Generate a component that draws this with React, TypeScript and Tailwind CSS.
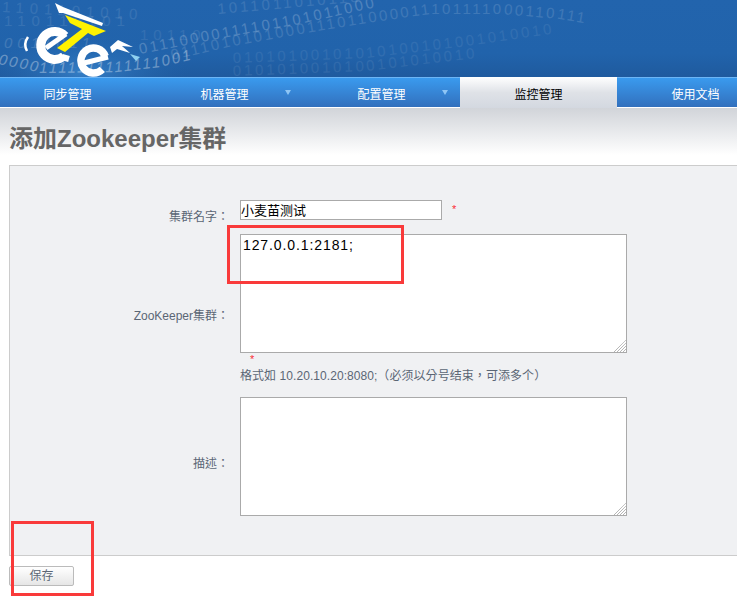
import React from "react";

const navItems = [
  { label: "同步管理" },
  { label: "机器管理", arrow: true },
  { label: "配置管理", arrow: true },
  { label: "监控管理", active: true },
  { label: "使用文档" },
];

// binary digits in the banner
const HeaderArt = () => (
  <svg width="737" height="77" viewBox="0 0 737 77" className="block">
    <defs>
      <radialGradient id="glow" cx="0.5" cy="0.5" r="0.5">
        <stop offset="0" stopColor="#3f8fd8" stopOpacity="0.7" />
        <stop offset="1" stopColor="#2163ab" stopOpacity="0" />
      </radialGradient>
      <linearGradient id="fade" x1="0" y1="0" x2="0" y2="1">
        <stop offset="0" stopColor="#2264ad" />
        <stop offset="0.7" stopColor="#2163ab" />
        <stop offset="1" stopColor="#1f5a9e" />
      </linearGradient>
      <path id="a" d="M140 54 L233 36 L300 24 L372 8 L460 -8" />
      <path id="b" d="M172 60 L233 46 L300 34 L367 23 L430 14 L500 14 L560 19 L660 36" />
      <path id="c" d="M-2 64 L43 73 L117 72 L160 67 L190 60" />
      <path id="d" d="M233 63 L367 58 L467 46 L550 34 L680 34" />
      <path id="e" d="M233 76 L367 71 L467 59 L550 51 L640 51" />
      <path id="f" d="M2 12 L180 22" />
      <path id="g" d="M4 26 L150 26" />
    </defs>
    <rect width="737" height="77" fill="url(#fade)" />
    <ellipse cx="85" cy="72" rx="105" ry="38" fill="url(#glow)" />
    <g fontFamily="Liberation Sans, sans-serif" fontSize="15" fill="#fff">
      <text opacity="0.09" letterSpacing="6"><textPath href="#f">1101101010</textPath></text>
      <text opacity="0.09" letterSpacing="6"><textPath href="#g">110110101</textPath></text>
      <text x="4" y="48" opacity="0.14" fontStyle="italic" letterSpacing="5">0011011</text>
      <text x="140" y="40" opacity="0.08" letterSpacing="5">10110</text>
      <text opacity="0.2" letterSpacing="2.5"><textPath href="#a">01110000111101101011000</textPath></text>
      <text opacity="0.13" letterSpacing="2.5"><textPath href="#b">0111010101000111011000011101111000110111</textPath></text>
      <text opacity="0.32" letterSpacing="2.2" fontStyle="italic"><textPath href="#c">000011111111111110011</textPath></text>
      <text opacity="0.07" letterSpacing="2.8"><textPath href="#d">01010100101010100101001010010</textPath></text>
      <text opacity="0.07" letterSpacing="2.8"><textPath href="#e">0101010010100101010010</textPath></text>
      <text x="218" y="14" opacity="0.11" letterSpacing="3" transform="rotate(-5 218 14)">1011011010110</text>
    </g>
    {/* logo */}
    <g fill="none" stroke="#fff">
      <path d="M55 3 L63 7 L103 23 L102 26 L63 13 L59 13 Z" fill="#fff" stroke="none" />
      <path d="M64 56 A 14 14 0 1 1 65 36" strokeWidth="9" />
      <path d="M46 48 L66 34" strokeWidth="5" />
      <path d="M62 57 L69 59" strokeWidth="6" />
      <path d="M65 15 L106 31 L94 36 L88 33 L65 52 L57 48 L82 29 L70 23 Z" fill="#fff200" stroke="none" />
      <path d="M105.2 56.2 A 12.5 12.5 0 1 0 102.3 69.3" strokeWidth="7.5" />
      <path d="M84 63 L108 57" strokeWidth="5" />
      <path d="M28 37 Q23 44 27 51" strokeWidth="2.5" />
      <path d="M110 47 L118 40 L133 47 L122 46 L130 53 L117 49 L112 53 Z" fill="#fff" stroke="none" />
      <path d="M130 54 L140 57 L136 61 Z" fill="#8fd0f0" stroke="none" />
    </g>
  </svg>
);

const Grip = () => (
  <svg width="12" height="12" viewBox="0 0 12 12" className="pointer-events-none absolute right-px bottom-px">
    <path d="M0 12 L12 0 M3 12 L12 3 M6 12 L12 6 M9 12 L12 9" stroke="#999" strokeDasharray="1 0.5" />
  </svg>
);

export default function App() {
  return (
    <div className="relative h-[615px] w-[737px] overflow-hidden bg-white font-['Liberation_Sans','Noto_Sans_CJK_TC',sans-serif] text-xs text-[#5b6675]">
      <HeaderArt />

      <nav className="flex h-[31px] border-b border-white bg-gradient-to-b from-[#3a9cf0] to-[#3270bd] shadow-[inset_0_1px_0_#6db5f5]">
        <div className="-ml-[11px] flex">
          {navItems.map((item) => (
            <div
              key={item.label}
              className={
                item.active
                  ? "relative z-10 flex h-[31px] w-[157px] shrink-0 items-center justify-center bg-gradient-to-b from-white via-[#dfe2e7] via-50% to-[#d3d8e0] pt-[5px] text-black"
                  : "relative flex h-[30px] w-[157px] shrink-0 items-center justify-center pt-[5px] text-white"
              }
            >
              {item.label}
              {item.arrow && (
                <span className="absolute top-[13px] left-[139px] h-0 w-0 border-x-[3px] border-t-[5px] border-x-transparent border-t-[#8ec5f5]" />
              )}
            </div>
          ))}
        </div>
      </nav>

      <div className="h-[47px] bg-gradient-to-b from-[#d1d4d9] to-white pt-[16px] pl-[9px]">
        <h1 className="text-2xl leading-[30px] font-bold text-[#666]">添加Zookeeper集群</h1>
      </div>

      <form className="mt-[10px] ml-[9px] h-[391px] border border-r-0 border-[#ccc] bg-[#f0f1f3] pt-[34px]">
        <div className="mb-[2px] grid h-[32px] grid-cols-[219px_1fr] items-center gap-x-[11px]">
          <label className="pt-[2px] text-right">集群名字：</label>
          <div className="flex h-full items-start">
            <input
              defaultValue="小麦苗测试"
              className="h-[20px] w-[202px] border border-[#aaa] bg-white pb-[2px] text-[13px] text-black outline-none"
            />
            <span className="ml-[10px] text-[11px] leading-[18px] text-red-500">*</span>
          </div>
        </div>

        <div className="mb-px grid h-[162px] grid-cols-[219px_1fr] items-center gap-x-[11px]">
          <label className="pt-[2px] text-right">ZooKeeper集群：</label>
          <div className="h-full">
            <div className="relative h-[119px] w-[387px]">
              <textarea
                defaultValue="127.0.0.1:2181;"
                className="block h-full w-full resize-none border border-[#aaa] bg-white px-[2px] text-[14px] leading-[20px] tracking-[0.9px] text-black outline-none"
              />
              <Grip />
            </div>
            <div className="h-[12px] pl-[10px] text-[11px] leading-[12px] text-red-500">*</div>
            <div className="mt-[3px] leading-[16px] tracking-[0.06px]">
              格式如 10.20.10.20:8080;（必须以分号结束，可添多个）
            </div>
          </div>
        </div>

        <div className="grid h-[132px] grid-cols-[219px_1fr] items-center gap-x-[11px]">
          <label className="pt-[2px] text-right">描述：</label>
          <div className="h-full">
            <div className="relative h-[119px] w-[387px]">
              <textarea className="block h-full w-full resize-none border border-[#aaa] bg-white outline-none" />
              <Grip />
            </div>
          </div>
        </div>
      </form>

      <button className="mt-[10px] ml-[9px] block h-[20px] w-[65px] rounded-[2px] border border-[#bbb] bg-gradient-to-b from-white to-[#e6e6e6] text-center text-xs text-[#5b6675]">
        保存
      </button>

      {/* red annotation boxes on top of the screenshot */}
      <div className="absolute top-[225px] left-[227px] h-[59px] w-[177px] border-[3px] border-[#f93a3a]" />
      <div className="absolute top-[521px] left-[11px] h-[75px] w-[83px] border-[3px] border-[#f93a3a]" />
    </div>
  );
}
